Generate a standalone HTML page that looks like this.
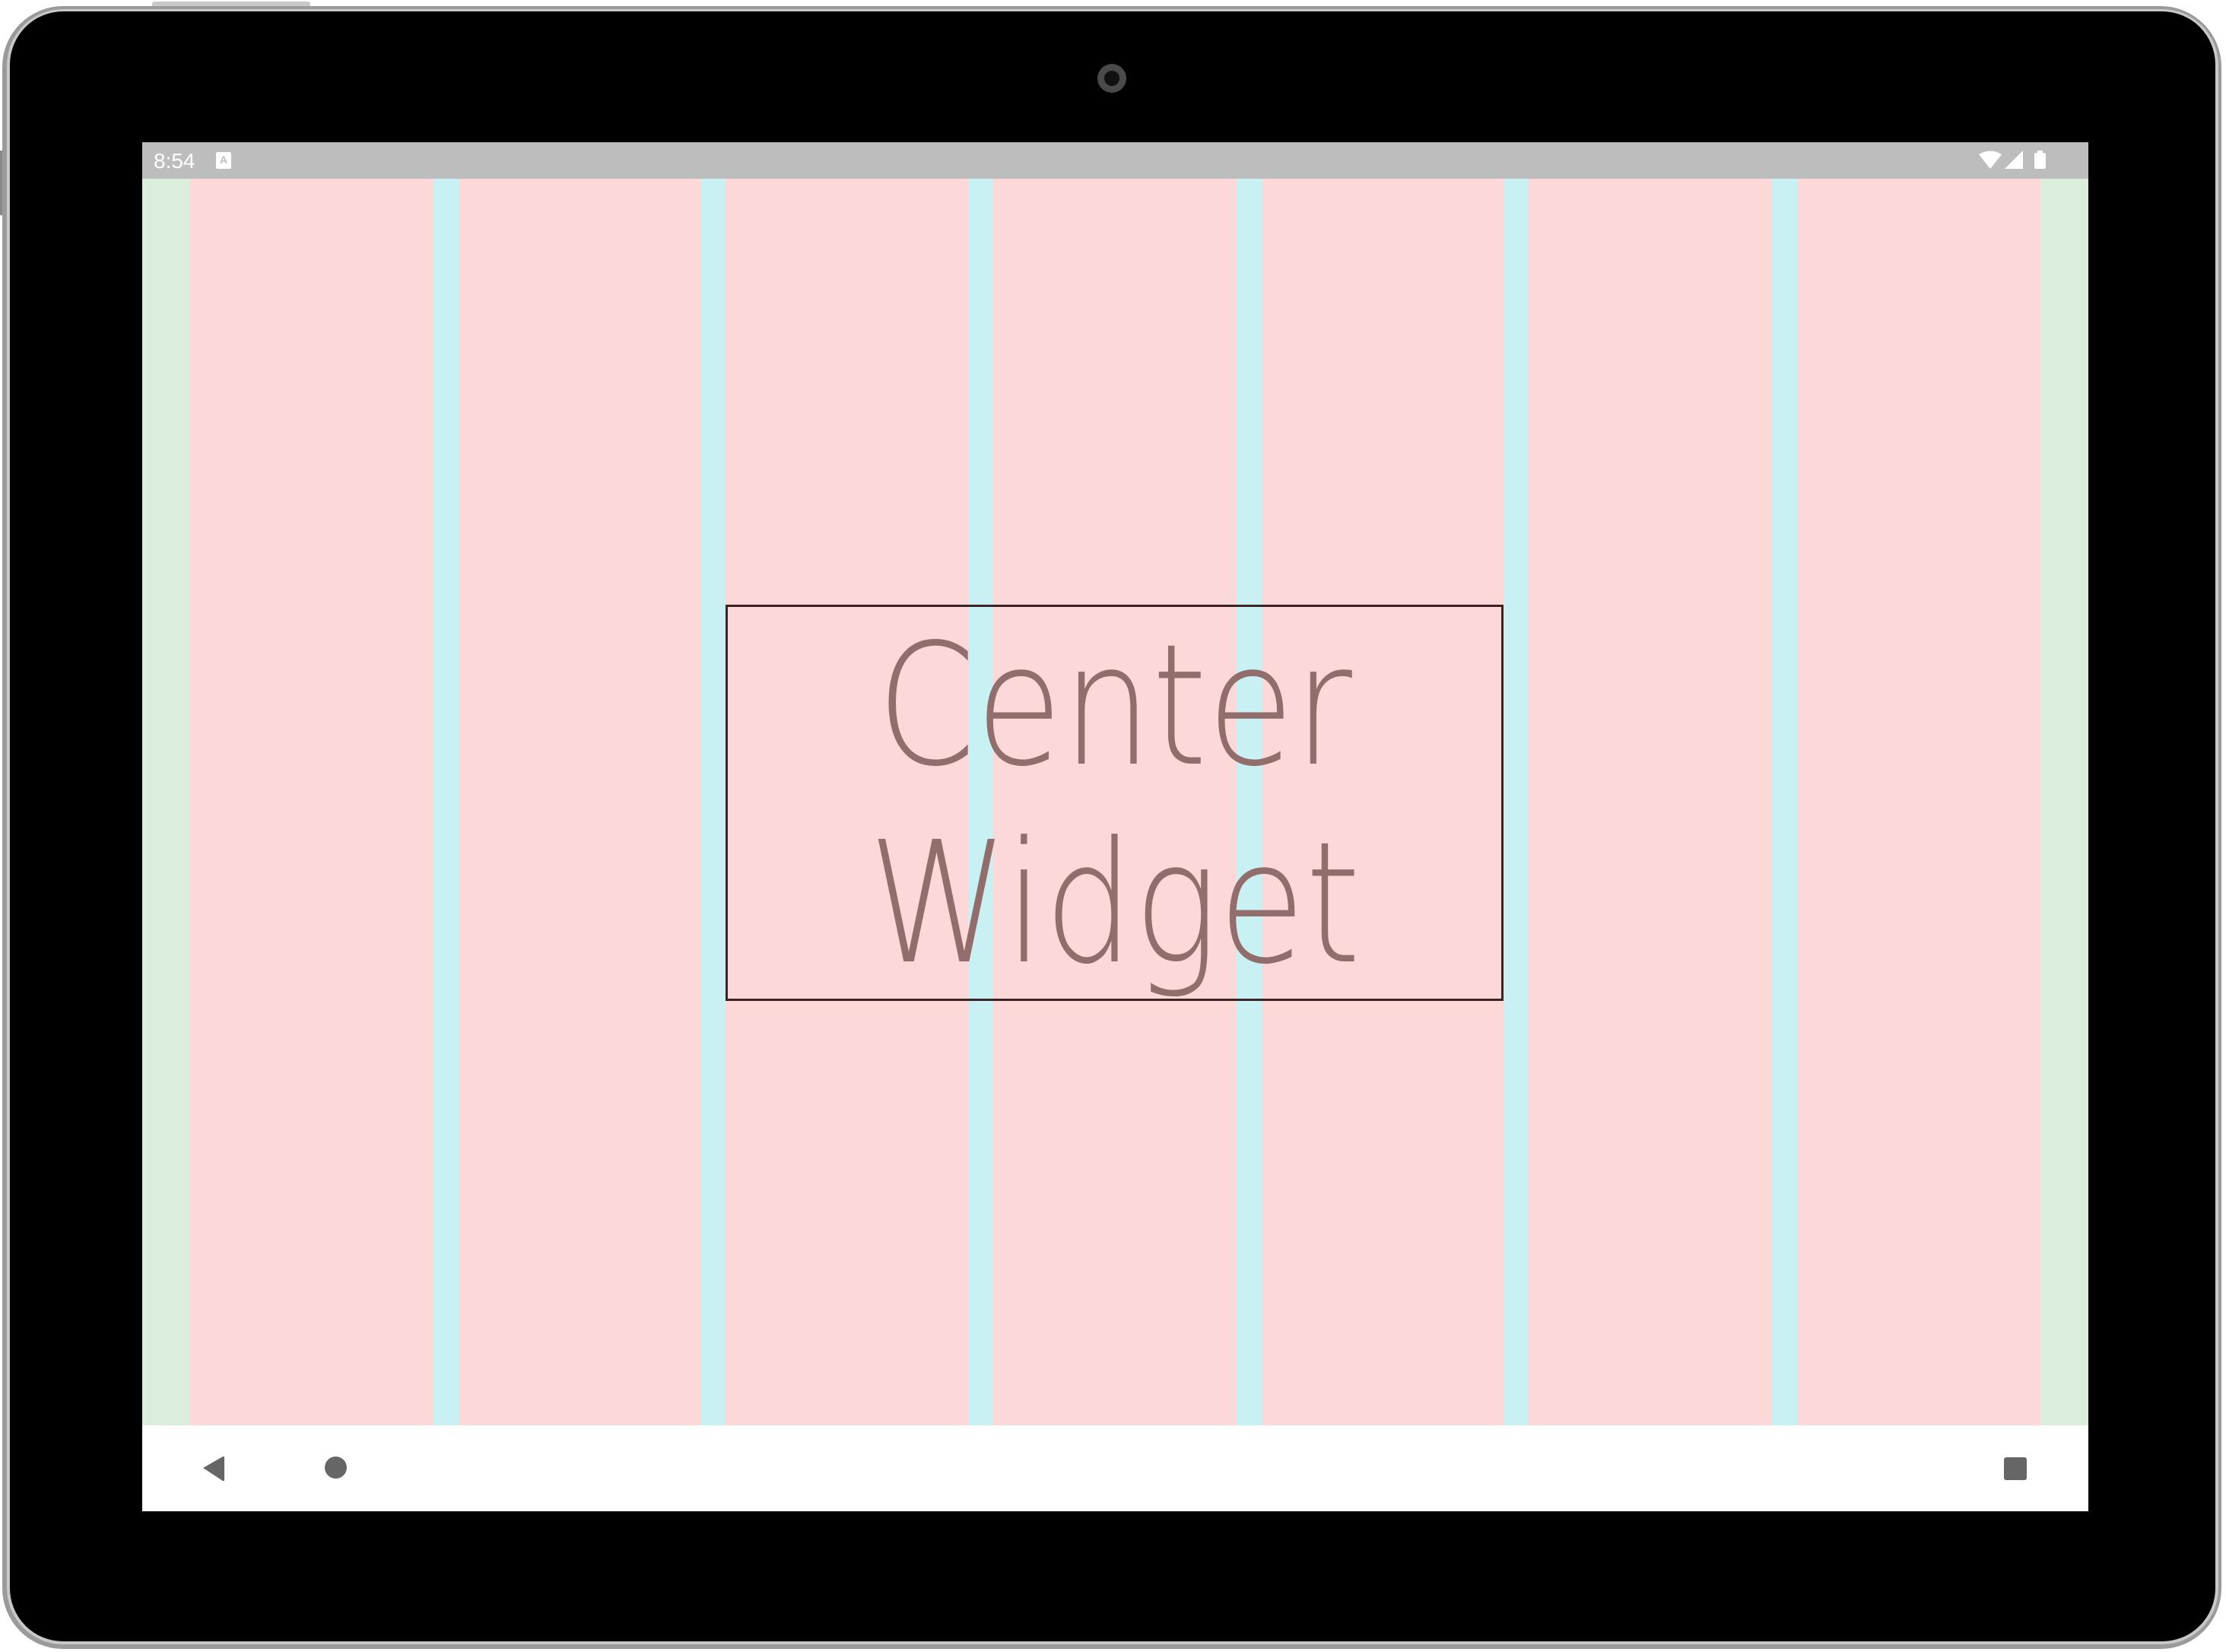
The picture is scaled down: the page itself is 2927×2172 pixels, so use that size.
<!DOCTYPE html>
<html><head><meta charset="utf-8"><style>
html,body{margin:0;padding:0;background:#fff;}
body{width:2927px;height:2172px;position:relative;overflow:hidden;font-family:"Liberation Sans",sans-serif;}
.abs{position:absolute;}
.dev{left:3px;top:8px;width:2918px;height:2160px;border-radius:80px;background:#9a9a9a;}
.dev2{left:9px;top:12px;width:2908px;height:2150px;border-radius:74px;background:#c8c8c8;}
.dev3{left:13px;top:15px;width:2900px;height:2143px;border-radius:70px;background:#000;}
.screen{left:187px;top:187px;width:2559px;height:1800px;background:#fcd9d8;overflow:hidden;}
.t{transform:scaleX(0.84);}
</style></head><body>
<div class="abs" style="left:200px;top:2px;width:208px;height:6px;background:#c9c9c9;border-radius:3px 3px 0 0"></div>
<div class="abs" style="left:0;top:198px;width:5px;height:85px;background:#888;"></div>
<div class="abs dev"></div>
<div class="abs dev2"></div>
<div class="abs dev3"></div>
<div class="abs" style="left:1443px;top:84px;width:38px;height:38px;border-radius:50%;background:#4a4a4a"></div>
<div class="abs" style="left:1452px;top:93px;width:20px;height:20px;border-radius:50%;background:#111"></div>
<div class="abs screen">
  <div class="abs" style="left:0;top:0;width:2559px;height:48px;background:#bdbdbd"></div>
  <div class="abs" style="left:15px;top:10px;font-size:28px;line-height:30px;color:#fff;">8:54</div>
  <div class="abs" style="left:97px;top:13px;width:20px;height:22px;background:#fff;border-radius:2px;font-size:14px;line-height:20px;text-align:center;color:#bdbdbd;font-weight:bold">A</div>
  <svg class="abs" style="left:2415px;top:11px" width="90" height="26" viewBox="0 0 90 26">
    <path d="M0 5 Q15 -4 30 5 L15 24 Z" fill="#fff"/>
    <path d="M34 24 L58 24 L58 0 Z" fill="#fff"/>
    <rect x="73" y="3" width="15" height="21" rx="2" fill="#fff"/>
    <rect x="77" y="0" width="7" height="4" fill="#fff"/>
  </svg>
  <div class="abs" style="left:0;top:48px;width:63px;height:1639px;background:#dbeedb"></div>
  <div class="abs" style="left:2496px;top:48px;width:63px;height:1639px;background:#dbeedb"></div>
  <div class="abs" style="left:383px;top:48px;width:33px;height:1639px;background:#c9f0f2"></div>
  <div class="abs" style="left:734px;top:48px;width:33px;height:1639px;background:#c9f0f2"></div>
  <div class="abs" style="left:1086px;top:48px;width:33px;height:1639px;background:#c9f0f2"></div>
  <div class="abs" style="left:1439px;top:48px;width:33px;height:1639px;background:#c9f0f2"></div>
  <div class="abs" style="left:1790px;top:48px;width:33px;height:1639px;background:#c9f0f2"></div>
  <div class="abs" style="left:2143px;top:48px;width:33px;height:1639px;background:#c9f0f2"></div>
  <div class="abs" style="left:767px;top:612px;width:1023px;text-align:center;font-family:'DejaVu Sans ExtraLight','DejaVu Sans',sans-serif;font-weight:200;font-size:221px;line-height:260px;color:#916e6b;">
    <div class="t">Center</div>
    <div class="t">Widget</div>
  </div>
  <div class="abs" style="left:767px;top:608px;width:1017px;height:515px;border:3px solid #3a2424;"></div>
  <div class="abs" style="left:0;top:1687px;width:2559px;height:113px;background:#fff"></div>
  <svg class="abs" style="left:78px;top:1727px" width="32" height="34" viewBox="0 0 32 34"><path d="M2 16 L28 1 Q30 0 30 3 L30 31 Q30 34 28 33 Z" fill="#666"/></svg>
  <div class="abs" style="left:240px;top:1728px;width:29px;height:29px;border-radius:50%;background:#666"></div>
  <div class="abs" style="left:2448px;top:1729px;width:30px;height:30px;border-radius:3px;background:#666"></div>
</div>
</body></html>
